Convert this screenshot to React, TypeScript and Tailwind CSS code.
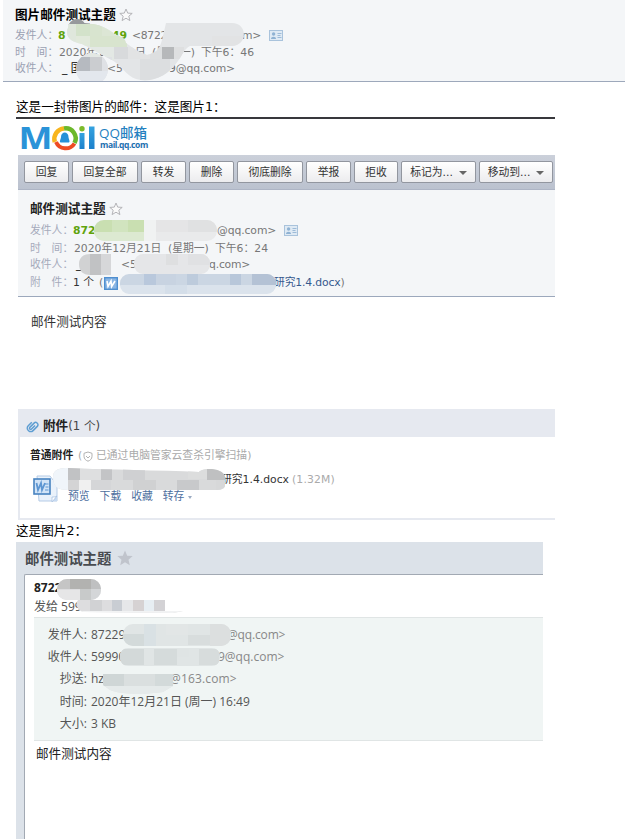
import type { ReactNode } from "react";

type Cell = [x: number, y: number, w: number, h: number, fill: string];

/** Pixelated smear that hides the private parts of a line. */
function Mosaic({ id, box, shape, cells }: { id: string; box: string; shape: ReactNode; cells: Cell[] }) {
  return (
    <svg className="pointer-events-none absolute inset-0 h-full w-full" viewBox={box} preserveAspectRatio="xMinYMin meet">
      <defs>
        <clipPath id={id}>{shape}</clipPath>
      </defs>
      <g clipPath={`url(#${id})`} shapeRendering="crispEdges">
        {cells.map(([x, y, w, h, fill], i) => (
          <rect key={i} x={x} y={y} width={w} height={h} fill={fill} />
        ))}
      </g>
    </svg>
  );
}

function StarOutline() {
  return (
    <svg width="14" height="14" viewBox="0 0 14 14" fill="#fafafa" stroke="#b4b4b8" strokeWidth="1">
      <path d="M7 1l1.7 4.1 4.5.3-3.4 2.8 1.1 4.4L7 10.2l-3.9 2.4 1.1-4.4L.8 5.4l4.5-.3z" />
    </svg>
  );
}

function ContactCard() {
  return (
    <svg width="14" height="12" viewBox="0 0 14 12">
      <rect x=".5" y=".5" width="13" height="10" fill="#dfeaf4" stroke="#a9c3dc" />
      <circle cx="4.6" cy="4" r="1.7" fill="#8fb2d3" />
      <path d="M2 9c0-3 5-3 5 0z" fill="#8fb2d3" />
      <path d="M8.500 3.500h4M8.500 5.500h3M8.500 7.500h4" stroke="#9dbbd8" />
    </svg>
  );
}

function WordIcon() {
  return (
    <svg width="14" height="13" viewBox="0 0 14 13">
      <rect x=".7" y=".7" width="12.6" height="11.6" fill="#8bb6e4" stroke="#4f8fd0" strokeWidth="1.4" />
      <path d="M3 4l1 5.500L7 4l.6 5.500L11 4" fill="none" stroke="#fff" strokeWidth="1.6" />
    </svg>
  );
}

function WordFile() {
  return (
    <svg width="26" height="28" viewBox="0 0 26 28">
      <path d="M4 1h13l7 9v16H6z" fill="#eaf2fb" stroke="#b5cbe6" />
      <path d="M6 26h13l5-6v6z" fill="#c6daf2" />
      <path d="M19 27l5-6c-1 1-4 1-5 1z" fill="#fff" stroke="#a8c2e2" strokeWidth=".8" />
      <rect x="1" y="4" width="16" height="15" fill="#d2e4f7" stroke="#4883c0" strokeWidth="1.6" />
      <path d="M3.500 8l1.500 7 3-7 1 7 3-7" fill="none" stroke="#5d96d2" strokeWidth="1.8" />
      <path d="M12 9h3.500M12.500 12h3M12 15h3.500" stroke="#5d96d2" strokeWidth="1" />
    </svg>
  );
}

function Logo() {
  return (
    <div className="flex h-9 items-start">
      <svg width="80" height="36" viewBox="16 119 80 36">
        <defs>
          <linearGradient id="blue" x1="0" y1="0" x2="0" y2="1">
            <stop offset="0" stopColor="#35a3e0" />
            <stop offset="1" stopColor="#1c80cb" />
          </linearGradient>
        </defs>
        <text x="18.500" y="149" fontFamily="Open Sans" fontWeight="700" fontSize="31" textLength="34" lengthAdjust="spacingAndGlyphs" fill="#2a93d8">
          M
        </text>
        <circle cx="65" cy="138" r="12.500" fill="#fff" />
        <path d="M54.800 142A10.500 10.500 0 0 1 64 128.500" fill="none" stroke="#f8b51e" strokeWidth="4.500" />
        <path d="M64 128.500A10 10 0 0 1 74.500 143" fill="none" stroke="#6cb82c" strokeWidth="4.500" />
        <path d="M56 142A10.500 10.500 0 0 0 74.500 143.500" fill="none" stroke="#ee4b23" strokeWidth="4" />
        <path d="M60.500 142.500c-1.500-1 .5-3.500.5-5.500 0-6 7.500-6 7.500 0 0 2 2 4.500.5 5.500z" fill="#2590d8" />
        <rect x="79.500" y="133" width="5" height="16" fill="url(#blue)" />
        <circle cx="82" cy="128.700" r="2.700" fill="#7cbb2b" />
        <rect x="89" y="126.500" width="5.500" height="22.500" fill="url(#blue)" />
      </svg>
      <div className="ml-[3px] mt-[8px] font-['Open_Sans','Noto_Sans_CJK_SC',sans-serif]">
        <div className="flex h-[13px] items-center text-[13.5px] font-medium leading-[13px] text-[#237fc0]">QQ邮箱</div>
        <div className="flex h-[9px] items-center pl-px text-[8.500px] font-bold leading-[9px] tracking-[-0.4px] text-[#1c6fb0]">mail.qq.com</div>
      </div>
    </div>
  );
}

function ToolButton({ width, children, menu }: { width: string; children: ReactNode; menu?: boolean }) {
  return (
    <div className={`${width} flex h-[22px] shrink-0 items-center justify-center rounded-[2px] border border-[#92969f] bg-gradient-to-b from-white to-[#ececee] pt-[2px] text-[#333]`}>
      {children}
      {menu && <span className="-mt-px ml-[6px] border-x-[4px] border-t-[4px] border-x-transparent border-t-[#666]" />}
    </div>
  );
}

const headerCells: Cell[] = [
  [60, 15, 200, 70, "#e3e5e7"],
  [60, 15, 30, 10, "#96999c"],
  [60, 24, 16, 22, "#dfe7dc"],
  [76, 24, 24, 12, "#d3e2ca"],
  [90, 24, 12, 12, "#d8e4cf"],
  [76, 36, 14, 10, "#e1e9db"],
  [90, 36, 37, 11, "#d8e4ce"],
  [102, 24, 25, 12, "#dce6d5"],
  [88, 47, 27, 13, "#e3e8e4"],
  [114, 47, 14, 12, "#d8dadc"],
  [128, 47, 24, 12, "#e2e3e4"],
  [150, 47, 12, 12, "#dddfe0"],
  [162, 47, 12, 12, "#b6b8ba"],
  [174, 47, 10, 12, "#dedfe0"],
  [140, 59, 30, 22, "#dcdee0"],
  [76, 57, 14, 14, "#b6bac0"],
  [90, 57, 12, 14, "#cbcdd0"],
  [102, 57, 10, 14, "#dfe1e5"],
  [76, 71, 34, 14, "#e3e7ed"],
  [212, 36, 32, 11, "#e2e3e4"],
];

const panelCells: Cell[] = [
  [94, 218, 125, 26, "#e9eaeb"],
  [94, 218, 50, 14, "#c9dfb1"],
  [112, 218, 16, 14, "#d1e4bf"],
  [94, 232, 50, 12, "#dce9d1"],
  [144, 218, 12, 26, "#f0f2f2"],
  [156, 218, 32, 14, "#e5e5e6"],
  [188, 218, 30, 14, "#e0e1e2"],
  [78, 253, 14, 22, "#d1d2d3"],
  [90, 253, 11, 22, "#c1c2c4"],
  [101, 253, 12, 22, "#d6d7d9"],
  [133, 253, 78, 22, "#e5e6e8"],
  [166, 253, 12, 12, "#dedfe0"],
  [188, 253, 22, 12, "#e0e1e3"],
  [120, 274, 156, 12, "#cbd6e3"],
  [144, 274, 12, 11, "#b9c8dc"],
  [156, 274, 20, 11, "#c8d3e1"],
  [187, 274, 11, 11, "#bdcbdc"],
  [230, 274, 11, 11, "#b8c7da"],
  [252, 274, 24, 11, "#b4c2d5"],
  [120, 285, 156, 10, "#dbe3ec"],
  [165, 285, 22, 10, "#d4dee9"],
];

const attachmentCells: Cell[] = [
  [50, 468, 176, 24, "#d9dadb"],
  [50, 468, 18, 24, "#f0f5fa"],
  [68, 468, 12, 12, "#c1c2c4"],
  [80, 468, 21, 12, "#dedfe0"],
  [101, 468, 11, 12, "#c3c4c6"],
  [123, 468, 22, 12, "#cfd0d2"],
  [68, 480, 11, 12, "#d4d4d5"],
  [79, 480, 12, 12, "#f0f0f0"],
  [91, 480, 20, 12, "#d5d6d8"],
  [133, 480, 23, 12, "#d0d1d2"],
  [177, 480, 22, 12, "#c8c9cb"],
  [188, 468, 20, 11, "#dcdddd"],
  [207, 468, 19, 12, "#bfc0c1"],
  [216, 480, 10, 12, "#d7d8d9"],
];

const senderCells: Cell[] = [
  [56, 578, 130, 36, "#dddddf"],
  [56, 578, 14, 11, "#c5c5c5"],
  [70, 578, 21, 11, "#b2b2b0"],
  [91, 578, 10, 11, "#bfc0c1"],
  [56, 590, 24, 10, "#e6e6e7"],
  [80, 589, 11, 11, "#c8caca"],
  [91, 589, 10, 11, "#d4d6d8"],
  [90, 600, 12, 12, "#d1d2d4"],
  [112, 600, 10, 11, "#c9cdd3"],
  [122, 600, 11, 11, "#e6e7e9"],
  [133, 600, 11, 11, "#d6d2d3"],
  [144, 600, 10, 11, "#e7eef3"],
  [154, 600, 11, 11, "#d3d2d5"],
  [78, 611, 108, 4, "#f2f3f4"],
];

const detailCells: Cell[] = [
  [100, 620, 140, 75, "#e0e5e5"],
  [122, 634, 22, 12, "#d3dada"],
  [144, 624, 12, 22, "#d9e1e4"],
  [166, 624, 22, 11, "#e2e6e6"],
  [188, 635, 22, 10, "#d8dddd"],
  [210, 624, 20, 22, "#dcdfdf"],
  [120, 649, 24, 16, "#d3d9d9"],
  [154, 649, 23, 16, "#d5dbdb"],
  [177, 649, 12, 8, "#dfe4e4"],
  [199, 649, 20, 16, "#d7dcdc"],
  [102, 674, 22, 12, "#cfd6d6"],
  [124, 674, 31, 12, "#dadfdf"],
  [155, 674, 18, 12, "#d3dada"],
  [102, 686, 72, 10, "#e5eaea"],
];

export default function App() {
  return (
    <div className="h-[839px] w-[625px] overflow-hidden whitespace-nowrap bg-white font-['DejaVu_Sans','Noto_Sans_CJK_SC',sans-serif] text-[10.8px] text-[#777]">
      <header className="relative ml-[3px] h-[82px] border-b border-[#9da8bb] bg-[#f4f6f8] pl-[12px] pt-[5px]">
        <div className="flex h-5 items-center text-[12.6px] font-bold text-black">
          <span className="w-[104px]">图片邮件测试主题</span>
          <StarOutline />
        </div>
        <div className="flex h-[22px] items-center">
          <span className="w-[43px] text-[#9ba1b3]">发件人：</span>
          <span className="w-[54px] font-bold text-[#60a30c]">8</span>
          <span className="w-[20px] font-bold text-[#60a30c]">49</span>
          <span className="w-[110px] tracking-[-0.3px]">&lt;8722</span>
          <span className="w-[27px] tracking-[-0.3px]">m&gt;</span>
          <ContactCard />
        </div>
        <div className="flex h-3 items-center">
          <span className="w-[44px] text-[#9ba1b3]">时　间：</span>
          <span className="w-[76px]">2020年1</span>
          <span className="w-[17px]">日</span>
          <span className="w-[28px]">(星</span>
          <span className="w-[21px]">一)</span>
          <span>下午6：46</span>
        </div>
        <div className="flex h-[21px] items-center">
          <span className="w-[47px] text-[#9ba1b3]">收件人：</span>
          <span className="w-[45px] text-black">_ 国</span>
          <span className="w-[62px]">&lt;5</span>
          <span className="tracking-[-0.1px]">9@qq.com&gt;</span>
        </div>
        <Mosaic
          id="header-smear"
          box="3 0 622 81"
          shape={
            <>
              <circle cx="77" cy="28" r="9" />
              <path d="M67 32c0-8 9-9 17-9 14 1 21 4 28 9 5 5 13 4 14 11 7 5 14 10 21 12 8-2 12-4 15-15l4-17h66c16 0 16 23-1 23h-41c-6 3-7 8-12 15-11 16-27 22-42 18-10-3-15-15-26-20L82 44c-9-2-15-5-15-12z" />
              <circle cx="92" cy="69" r="16" />
            </>
          }
          cells={headerCells}
        />
      </header>

      <main className="ml-4">
        <p className="mt-[14px] flex h-[21px] items-center pt-px text-[12.6px] text-black">这是一封带图片的邮件：这是图片1：</p>

        <section className="w-[539px] border-t-2 border-[#38383c]">
          <Logo />
          <div className="ml-[2px]">
            <div className="flex h-[35px] items-center gap-[3px] border-b border-[#aeb5c5] bg-gradient-to-b from-[#cbd0da] to-[#bbc2cf] pl-[6px]">
              <ToolButton width="w-[45px]">回复</ToolButton>
              <ToolButton width="w-[66px]">回复全部</ToolButton>
              <ToolButton width="w-[45px]">转发</ToolButton>
              <ToolButton width="w-[45px]">删除</ToolButton>
              <ToolButton width="w-[66px]">彻底删除</ToolButton>
              <ToolButton width="w-[45px]">举报</ToolButton>
              <ToolButton width="w-[44px]">拒收</ToolButton>
              <ToolButton width="w-[75px]" menu>标记为...</ToolButton>
              <ToolButton width="w-[74px]" menu>移动到...</ToolButton>
            </div>

            <div className="relative h-[107px] border-b border-[#9ca8bc] bg-[#f4f6f8] pl-3 pt-[9px]">
              <div className="flex h-5 items-center text-[12.6px] font-bold text-[#222]">
                <span className="w-[79px]">邮件测试主题</span>
                <StarOutline />
              </div>
              <div className="flex h-6 items-center">
                <span className="w-[43px] text-[#a5aabb]">发件人：</span>
                <span className="w-[144px] font-bold text-[#60a30c]">872</span>
                <span className="w-[67px] tracking-[-0.1px]">@qq.com&gt;</span>
                <ContactCard />
              </div>
              <div className="flex h-[11px] items-center pt-px">
                <span className="w-[44px] text-[#a5aabb]">时　间：</span>
                <span className="w-[94px]">2020年12月21日</span>
                <span className="w-[47px]">(星期一)</span>
                <span>下午6：24</span>
              </div>
              <div className="flex h-[23px] items-center">
                <span className="w-[46px] text-[#a5aabb]">收件人：</span>
                <span className="w-[45px] text-black">_</span>
                <span className="w-[88px]">&lt;5</span>
                <span className="tracking-[-0.2px]">q.com&gt;</span>
              </div>
              <div className="flex h-3 items-center">
                <span className="w-[43px] text-[#a5aabb]">附　件：</span>
                <span className="w-[26px] text-[#333]">1 个</span>
                <span className="w-[5px]">(</span>
                <WordIcon />
                <span className="ml-[156px] tracking-[-0.15px] text-[#36598e]">研究1.4.docx</span>
                <span>)</span>
              </div>
              <Mosaic
                id="panel-smear"
                box="18 190 537 106"
                shape={
                  <>
                    <rect x="94" y="220" width="123" height="21" rx="10" />
                    <path d="M79 264c0-6 4-10 11-10h21v21H90c-7 0-11-4-11-11z" />
                    <rect x="134" y="254" width="76" height="20" rx="9" />
                    <rect x="120" y="274" width="156" height="20" rx="9" />
                  </>
                }
                cells={panelCells}
              />
            </div>

            <div className="h-[112px] pl-[13px] pt-[15px] text-[12.6px] text-[#333]">
              <p className="flex h-5 items-center">邮件测试内容</p>
            </div>

            <div className="relative h-[111px] border-b-2 border-l-2 border-[#e6e9f0]">
              <div className="flex h-7 items-center bg-[#e6e9f0] pl-[7px] pt-[7px] text-[11.7px] text-[#444]">
                <svg className="mr-[5px] rotate-45" width="11" height="13" viewBox="0 0 11 13" fill="none" stroke="#5f9ed2" strokeWidth="1.5">
                  <path d="M2 4v5a3.400 3.400 0 0 0 6.800 0V3a2.300 2.300 0 0 0-4.600 0v6a1.200 1.200 0 0 0 2.400 0V4" />
                </svg>
                <span className="text-[12.6px] font-bold text-[#222]">附件</span>
                <span>(1 个)</span>
              </div>
              <div className="flex h-9 items-center pl-[10px] pt-[2px] text-[#aaa]">
                <span className="w-[48px] font-bold text-[#222]">普通附件</span>
                <span className="w-[5px]">(</span>
                <svg className="mr-[3px]" width="10" height="11" viewBox="0 0 10 11" fill="none" stroke="#b2b2b2">
                  <path d="M5 1l4 1.300v3C9 8 7 9.500 5 10.200 3 9.500 1 8 1 5.300v-3zM3 5l2 2 2-2" />
                </svg>
                <span>已通过电脑管家云查杀引擎扫描)</span>
              </div>
              <div className="flex h-8 items-start">
                <div className="ml-[13px] mt-[2px] w-[35px]">
                  <WordFile />
                </div>
                <div className="pt-px">
                  <div className="flex h-3 items-center pl-[153px]">
                    <span className="w-[71px] text-[#333]">研究1.4.docx</span>
                    <span className="tracking-[0.15px] text-[#aaa]">(1.32M)</span>
                  </div>
                  <div className="flex h-[22px] items-center gap-[10px] text-[#4d6f9e]">
                    <span>预览</span>
                    <span>下载</span>
                    <span>收藏</span>
                    <span>转存</span>
                    <span className="-ml-[6px] border-x-[2px] border-t-[3px] border-x-transparent border-t-[#9aabc2]" />
                  </div>
                </div>
              </div>
              <Mosaic
                id="attachment-smear"
                box="20 409 535 109"
                shape={<path d="M53 477c0-8 7-9 16-9 40 2 90 2 130 4 4-5 25-4 26 5v9c-2 5-8 4-26 4H68c-11 0-15-4-15-13z" />}
                cells={attachmentCells}
              />
            </div>
          </div>
        </section>

        <p className="flex h-[22px] items-center pt-px text-[12.6px] text-black">这是图片2：</p>

        <section className="h-[297px] w-[527px] bg-[#dce2e9] font-['Open_Sans','Noto_Sans_CJK_SC',sans-serif] text-[12px] text-[#555]">
          <div className="flex h-8 items-center pl-[9px] pt-[2px] text-[14.4px] font-bold text-[#484b50]">
            <span className="w-[92px]">邮件测试主题</span>
            <svg className="-mt-[3px]" width="16" height="16" viewBox="0 0 16 16" fill="#c0c4cc">
              <path d="M8 .5l2.200 5.200 5.500.4-4.200 3.600 1.300 5.500L8 12.300l-4.800 2.900 1.300-5.500L.3 6.100l5.500-.4z" />
            </svg>
          </div>
          <div className="relative ml-2 h-[265px] rounded-tl-[2px] border-l border-t border-[#a2a9b3] bg-white pl-[9px]">
            <div className="flex h-6 items-center pt-px font-bold text-[#222]">8722</div>
            <div className="flex h-[14px] items-center pt-px">发给 599</div>
            <div className="mt-1 h-[124px] border-y border-[#e0e5e5] bg-[#f0f5f4] pt-[5.5px]">
              <div className="flex h-[22.4px] items-center">
                <span className="w-[57px] pr-[4px] text-right">发件人:</span>
                <span className="w-[136px]">87229</span>
                <span className="tracking-[-0.15px] text-[#888]">@qq.com&gt;</span>
              </div>
              <div className="flex h-[22.4px] items-center">
                <span className="w-[57px] pr-[4px] text-right">收件人:</span>
                <span className="w-[127px]">59990</span>
                <span className="text-[#888]">9@qq.com&gt;</span>
              </div>
              <div className="flex h-[22.4px] items-center">
                <span className="w-[57px] pr-[4px] text-right">抄送:</span>
                <span className="w-[79px]">hz</span>
                <span className="tracking-[0.15px] text-[#888]">@163.com&gt;</span>
              </div>
              <div className="flex h-[22.4px] items-center">
                <span className="w-[57px] pr-[4px] text-right">时间:</span>
                <span>2020年12月21日 (周一) 16:49</span>
              </div>
              <div className="flex h-[22.4px] items-center">
                <span className="w-[57px] pr-[4px] text-right">大小:</span>
                <span>3 KB</span>
              </div>
            </div>
            <p className="flex h-6 items-center pl-[2px] pt-[2px] text-[12.6px] text-[#222]">邮件测试内容</p>
            <Mosaic
              id="sender-smear"
              box="25 575 518 264"
              shape={
                <>
                  <rect x="57" y="579" width="44" height="21" rx="10" />
                  <path d="M78 600h87v11h18l-10 2-90-1c-6-2-8-8-5-12z" />
                </>
              }
              cells={senderCells}
            />
            <Mosaic
              id="detail-smear"
              box="25 575 518 264"
              shape={
                <>
                  <rect x="123" y="624" width="108" height="22" rx="10" />
                  <rect x="120" y="648" width="100" height="18" rx="8" />
                  <path d="M103 674h70v12l-10 6c-20 3-45 2-53-2l-7-5z" />
                </>
              }
              cells={detailCells}
            />
          </div>
        </section>
      </main>
    </div>
  );
}
